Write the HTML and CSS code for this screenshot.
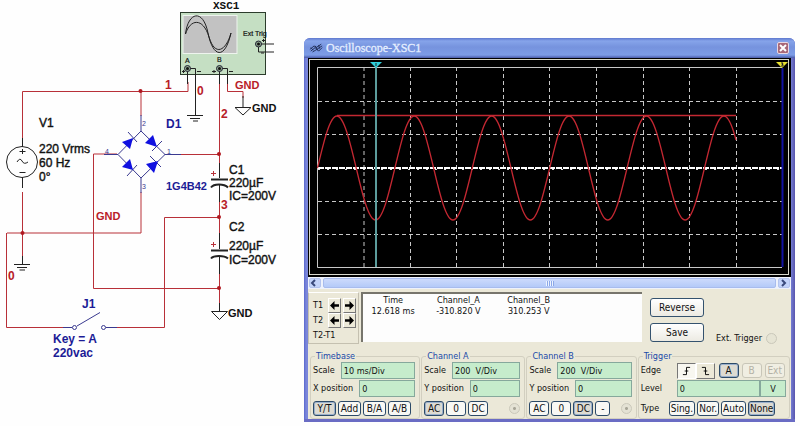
FILE: index.html
```html
<!DOCTYPE html>
<html lang="en">
<head>
<meta charset="utf-8">
<title>Oscilloscope-XSC1</title>
<link rel="stylesheet" href="styles.css">
</head>
<body>
<main class="workspace">
  <svg class="schematic" viewBox="0 0 304 426" role="img" aria-label="Bridge rectifier circuit">
    <g class="wire">
      <path d="M22.5 138V91.500H188V82M141 91V116M22.500 192V256M7 233H141V192M6.500 233V327.500H63M117 327.500H164.500V217.500H219M117 154H93.500V288.500H219M180 154.500H219M219.500 82V165M219.500 201V233M219.500 272V304M195.500 90V104M227.500 82V91.500H243V98"/>
      <path d="M211 173.500H216M213.500 171V176M211 244.500H216M213.500 242V247"/>
    </g>
    <g class="dot"><circle cx="140.500" cy="91" r="2"/><circle cx="22.500" cy="233" r="2"/><circle cx="219" cy="154" r="2"/><circle cx="219" cy="217" r="2"/><circle cx="219" cy="288" r="2"/></g>

    <g class="ink">
      <circle cx="22" cy="162" r="15.500"/>
      <path d="M22.500 138V147M22.500 177V188M19.500 151.500H25.500M22.500 149V154M19.500 172.500H25.500M17 162Q20 157 22 161T28 162"/>
      <path d="M22.500 256V264M14 264.500H30M17 267.500H27M19.500 270H25"/>
      <path d="M195.500 102V115M187 115.500H203M190 118.500H200M193 121H198"/>
      <path d="M243 96V107.500M235 107.500H251L243 115ZM219.500 303V311.500M211.500 311.500H227.500L219.500 319.500Z"/>
      <path d="M219.500 163V178M219.500 184V202M219.500 233V249M219.500 256V274"/>
      <path class="plate" d="M211 179.500H228M211 187.500Q213 184.500 219 184.500T228 187.500M211 250.500H228M211 258.500Q213 256 219 256T228 258.500"/>
    </g>

    <g class="lead">
      <path d="M141 115V131L118 154.500L141 178V193M141 131L165 154.500L141 178M104 154.500H118M165 154.500H181"/>
      <path d="M128 132L137 142M127 176L137 165M152 151L162 141M150 156L161 167"/>
      <path class="diode" d="M122 142L133 138L130 149ZM122 167L130 159L133 170ZM145 143L153 135L157 147ZM146 164L158 161L154 173Z"/>
      <path d="M63 327.500H72M77 326L100 312.500M106 327.500H117"/>
      <circle cx="74.500" cy="327.500" r="2"/><circle cx="103.500" cy="327.500" r="2"/>
    </g>

    <rect class="meter" x="180.500" y="12.500" width="85" height="62"/>
    <rect class="meter-screen" x="183" y="15.500" width="54" height="38"/>
    <g class="ink">
      <path d="M185.500 34C188 12 203 8 208 33S225 60 231 33M185.500 34C190 19 203 17 209 37S226 51 231 33"/>
      <path d="M187.500 68V84M189 68.500H195.500V104M219.500 68V84M221 68.500H227.500V84M258.500 44H274M258.500 44V52H274M182 71.500H185M183.500 70V73M197 71.500H201M212 71.500H216M214 70V73M229 71.500H233M262 40.500H265M263.500 39V42M261 53H264"/>
      <g class="terminal"><circle cx="187.500" cy="68.500" r="3"/><circle cx="219.500" cy="68.500" r="3"/><circle cx="258.500" cy="44" r="3"/></g>
    </g>
    <g class="terminal-core"><circle cx="187.500" cy="68.500" r="1.500"/><circle cx="219.500" cy="68.500" r="1.500"/><circle cx="258.500" cy="44" r="1.500"/></g>
    <g class="tiny"><text x="185" y="63">A</text><text x="217" y="62">B</text><text x="243" y="36">Ext Trig</text></g>

    <text class="device" x="213" y="9">XSC1</text>
    <g class="value">
      <text x="39" y="127">V1</text><text x="39" y="153">220 Vrms</text><text x="39" y="167">60 Hz</text><text x="39" y="181">0°</text>
      <text x="229" y="174">C1</text><text x="229" y="187">220µF</text><text x="229" y="200">IC=200V</text>
      <text x="229" y="231">C2</text><text x="229" y="250">220µF</text><text x="229" y="264">IC=200V</text>
    </g>
    <g class="ground"><text x="252" y="112">GND</text><text x="228" y="317">GND</text></g>
    <g class="net">
      <text x="165" y="89">1</text><text x="197" y="95">0</text><text x="221" y="118">2</text><text x="221" y="209">3</text><text x="8" y="280">0</text>
      <text class="net-gnd" x="235" y="89">GND</text><text class="net-gnd" x="96" y="220">GND</text>
    </g>
    <g class="part">
      <text x="166" y="128">D1</text><text class="part-no" x="166" y="190">1G4B42</text>
      <text x="82" y="308">J1</text><text x="53" y="343">Key = A</text><text x="53" y="357">220vac</text>
    </g>
    <g class="pin"><text x="142" y="126">2</text><text x="105" y="154">4</text><text x="167" y="154">1</text><text x="142" y="189">3</text></g>
  </svg>

  <section class="window">
    <header class="titlebar">
      <svg class="app-icon" viewBox="0 0 16 12" aria-hidden="true"><path d="M1 7L6 3L8 5L14 1M2 9L7 5L9 7L15 3M4 10L9 7L11 9L15 5M2 5L5 8M7 3L10 8M11 2L12 6"/></svg>
      <h1 class="title">Oscilloscope-XSC1</h1>
      <button class="close" type="button" aria-label="Close"><svg viewBox="0 0 10 10"><path d="M2 2L8 8M8 2L2 8"/></svg></button>
    </header>

    <svg class="screen" viewBox="0 0 483 219" role="img" aria-label="Channel A and B traces">
      <rect class="bezel" x="1.500" y="1.500" width="479" height="215"/>
      <path class="grid" d="M56 9V209M102.500 9V209M148.500 9V209M195.500 9V209M241.500 9V209M288.500 9V209M335.500 9V209M381.500 9V209M428.500 9V209M10 43.500H474M10 76.500H474M10 143.500H474M10 176.500H474"/>
      <path class="axis" d="M10 110H474"/>
      <path class="ticks" d="M10 111.500H474"/>
      <path class="frame" d="M474 9.500H9.500V209.500H474"/>
      <path class="cursor-two" d="M474.500 10V209"/>
      <path class="trace" d="M9.500 110c6.300-26.600 12.350-52 19.350-52s13.050 25.400 19.350 52s12.350 52 19.350 52s13.050-25.400 19.350-52s12.350-52 19.350-52s13.050 25.400 19.350 52s12.350 52 19.350 52s13.050-25.400 19.350-52s12.350-52 19.350-52s13.050 25.400 19.350 52s12.350 52 19.350 52s13.050-25.400 19.350-52s12.350-52 19.350-52s13.050 25.400 19.350 52s12.350 52 19.350 52s13.050-25.400 19.350-52s12.350-52 19.350-52s13.050 25.400 19.350 52s12.350 52 19.350 52s13.050-25.400 19.350-52s12.350-52 19.350-52c4.500 0 8.500 10 12.150 24"/>
      <path class="trace" d="M29 57.500H428"/>
      <path class="cursor-one" d="M68 9V209"/>
      <path class="flag-one" d="M62 4H74L68 10Z"/><path class="flag-mark" d="M68 5V8"/>
      <path class="flag-two" d="M468 4H480L474 10Z"/><path class="flag-mark" d="M473 5H475L474 6.500H475V8H473"/>
    </svg>

    <div class="scrollbar">
      <button type="button" class="scroll-step" aria-label="Scroll left"><svg viewBox="0 0 8 8"><path d="M5 1L2 4L5 7"/></svg></button>
      <div class="thumb"><span class="grip"></span></div>
      <button type="button" class="scroll-step" aria-label="Scroll right"><svg viewBox="0 0 8 8"><path d="M3 1L6 4L3 7"/></svg></button>
    </div>

    <div class="panel">
      <div class="readings">
        <div class="cursors">
          <span>T1</span>
          <button type="button" class="nudge" aria-label="T1 left"><svg viewBox="0 0 10 10"><path d="M0 5L5 0V3.500H10V6.500H5V10Z"/></svg></button>
          <button type="button" class="nudge" aria-label="T1 right"><svg viewBox="0 0 10 10"><path d="M10 5L5 0V3.500H0V6.500H5V10Z"/></svg></button>
          <span>T2</span>
          <button type="button" class="nudge" aria-label="T2 left"><svg viewBox="0 0 10 10"><path d="M0 5L5 0V3.500H10V6.500H5V10Z"/></svg></button>
          <button type="button" class="nudge" aria-label="T2 right"><svg viewBox="0 0 10 10"><path d="M10 5L5 0V3.500H0V6.500H5V10Z"/></svg></button>
          <span class="delta">T2-T1</span>
        </div>
        <div class="readout">
          <table>
            <thead><tr><th>Time</th><th>Channel_A</th><th>Channel_B</th></tr></thead>
            <tbody><tr><td>12.618 ms</td><td>-310.820 V</td><td>310.253 V</td></tr></tbody>
          </table>
        </div>
        <div class="actions">
          <button type="button" class="action">Reverse</button>
          <button type="button" class="action">Save</button>
        </div>
        <label class="external">Ext. Trigger <input type="radio" class="port port-faint" name="ext"></label>
      </div>

      <div class="groups">
        <fieldset class="group">
          <legend>Timebase</legend>
          <div class="row"><label for="tb-scale">Scale</label><input class="field" id="tb-scale" value="10 ms/Div"></div>
          <div class="row"><label for="tb-pos">X position</label><input class="field" id="tb-pos" value="0"></div>
          <div class="keys modes"><button type="button" class="key on">Y/T</button><button type="button" class="key">Add</button><button type="button" class="key">B/A</button><button type="button" class="key">A/B</button></div>
        </fieldset>
        <fieldset class="group">
          <legend>Channel A</legend>
          <div class="row"><label for="a-scale">Scale</label><input class="field" id="a-scale" value="200  V/Div"></div>
          <div class="row"><label for="a-pos">Y position</label><input class="field" id="a-pos" value="0"></div>
          <div class="keys"><button type="button" class="key on">AC</button><button type="button" class="key">0</button><button type="button" class="key">DC</button><input type="radio" class="port" name="port-a" checked aria-label="Channel A input"></div>
        </fieldset>
        <fieldset class="group">
          <legend>Channel B</legend>
          <div class="row"><label for="b-scale">Scale</label><input class="field" id="b-scale" value="200  V/Div"></div>
          <div class="row"><label for="b-pos">Y position</label><input class="field" id="b-pos" value="0"></div>
          <div class="keys"><button type="button" class="key">AC</button><button type="button" class="key">0</button><button type="button" class="key on">DC</button><button type="button" class="key narrow">-</button><input type="radio" class="port" name="port-b" checked aria-label="Channel B input"></div>
        </fieldset>
        <fieldset class="group trigger">
          <legend>Trigger</legend>
          <div class="row">
            <span class="name">Edge</span>
            <span class="edges">
              <button type="button" class="edge down" aria-label="Rising edge"><svg viewBox="0 0 10 10"><path d="M1 9H5V1H9M3 5H7"/></svg></button>
              <button type="button" class="edge" aria-label="Falling edge"><svg viewBox="0 0 10 10"><path d="M1 1H5V9H9M3 5H7"/></svg></button>
            </span>
            <span class="sources"><button type="button" class="key on">A</button><button type="button" class="key" disabled>B</button><button type="button" class="key" disabled>Ext</button></span>
          </div>
          <div class="row"><label class="name" for="level">Level</label><span class="level"><input class="field" id="level" value="0"><input class="field unit" aria-label="Unit" value="V"></span></div>
          <div class="keys types"><span class="name">Type</span><button type="button" class="key">Sing.</button><button type="button" class="key">Nor.</button><button type="button" class="key">Auto</button><button type="button" class="key on">None</button></div>
        </fieldset>
      </div>
    </div>
  </section>
</main>
</body>
</html>
```
FILE: styles.css
```css
* { box-sizing: border-box; }
body { margin: 0; background: #fefefe; color: #111; font: 9px/11px "DejaVu Sans Condensed", "DejaVu Sans", sans-serif; }
button, input { font: inherit; color: inherit; margin: 0; padding: 0; }
svg { display: block; }

.workspace { display: grid; grid-template-columns: 304fr 491fr; align-items: start; padding-right: 5px; }

/* schematic */
.schematic { width: 100%; font-family: "Liberation Sans", sans-serif; }
.wire { fill: none; stroke: #b83038; }
.dot { fill: #b01820; }
.ink { fill: none; stroke: #222; }
.plate { stroke-width: 2; }
.lead { fill: none; stroke: #3a3a90; }
.diode { fill: #1010e0; stroke: none; }
.meter { fill: #c5dfc3; stroke: #2c3c2c; }
.meter-screen { fill: #c2c2c2; stroke: #eef4ee; }
.terminal { fill: #90a890; stroke: #223; }
.terminal-core { fill: #111; }
.tiny { font-size: 7px; fill: #111; stroke: #111; stroke-width: .2; }
.device { font: bold 11px "Liberation Mono", monospace; fill: #111; }
.value { font-size: 12px; fill: #111; stroke: #111; stroke-width: .4; }
.ground { font-size: 11px; font-weight: bold; fill: #111; }
.net { font-size: 12px; font-weight: bold; fill: #b82028; }
.net-gnd, .part-no { font-size: 11px; }
.part { font-size: 12px; font-weight: bold; fill: #1c1c96; }
.pin { font-size: 7px; fill: #3a3a90; }

/* window */
.window { margin-top: 38px; padding: 0 4px 3px; border-radius: 6px 6px 0 0; background: linear-gradient(90deg, #5a68cc, #7a86da 2px, #7a86da 99%, #5854ac); box-shadow: inset 0 -3px #6a6cc4; }
.titlebar { display: flex; align-items: center; gap: 3px; height: 20px; margin: 0 -4px; padding: 0 6px 0 5px; border-radius: 6px 6px 0 0; background: linear-gradient(#5f78ce, #86a4ea 3px, #7693de 9px, #7d9ce6 17px, #4a5aa8); }
.app-icon { width: 14px; height: 11px; fill: none; stroke: #1c2850; }
.title { flex: 1; margin: 0; color: #e4eeff; font: 12px/16px "Liberation Serif", serif; -webkit-text-stroke: .3px #e4eeff; }
.close { width: 12px; height: 12px; border: 1px solid #e8d8e4; border-radius: 2px; background: #a86878; }
.close svg { width: 10px; height: 10px; fill: none; stroke: #fff; stroke-width: 2; }

.screen { width: 100%; background: #000; }
.bezel { fill: none; stroke: #d8d8cc; }
.grid { fill: none; stroke: #c8c8c8; stroke-dasharray: 4 3; }
.axis { stroke: #fff; stroke-width: 2; stroke-dasharray: 6 1; }
.ticks { stroke: #ddd; stroke-dasharray: 2 7; }
.frame { fill: none; stroke: #c8c8c8; }
.trace { fill: none; stroke: #c42832; stroke-width: 1.3; }
.cursor-one { stroke: #5c9c9c; stroke-width: 2; }
.cursor-two { stroke: #1010a0; stroke-width: 2; }
.flag-one { fill: #30d0dc; }
.flag-two { fill: #e8e030; }
.flag-mark { fill: none; stroke: #222; }

.scrollbar { display: flex; gap: 2px; height: 12px; padding: 1px; background: #eef2fc; }
.scroll-step { width: 12px; border: 1px solid #b4c4ee; border-radius: 2px; background: #c4d4fa; }
.scroll-step svg { width: 8px; height: 8px; fill: none; stroke: #3a4a7c; stroke-width: 2; }
.thumb { flex: 1; display: flex; justify-content: center; align-items: center; border: 1px solid #a8bcee; border-radius: 2px; background: linear-gradient(#ccdafc, #b4caf8); }
.grip { width: 8px; height: 5px; background: repeating-linear-gradient(90deg, #eef4ff 0 1px, #8ca8e8 1px 2px); }

.panel { padding: 3px 1px 0 0; background: #ebe8d8; }
.readings { display: grid; grid-template-columns: 51px minmax(0, 281fr) 60px minmax(0, 84fr); column-gap: 2px; min-height: 52px; }
.cursors { display: grid; grid-template-columns: 1fr 13px 13px; gap: 0 2px; align-content: start; align-items: center; padding: 5px 2px 0 4px; border: 1px solid #c4c0b0; border-top-color: #fff; }
.nudge { height: 15px; display: grid; place-items: center; border: 1px solid; border-color: #fff #777 #777 #fff; background: #ece9d8; }
.nudge svg { width: 9px; height: 9px; fill: #000; }
.delta { grid-column: 1 / -1; margin-top: 2px; }
.readout { margin-bottom: 2px; border: solid #77756c; border-width: 2px 0 0 2px; background: #fdfdfd; }
.readout table { border-collapse: collapse; table-layout: fixed; width: 72%; margin-top: 1px; }
.readout th, .readout td { padding: 0; font-weight: normal; text-align: center; white-space: nowrap; }
.readout th:first-child { width: 30%; }
.actions { display: grid; gap: 6px; align-content: start; margin: 6px 0 0 6px; }
.action { height: 19px; border: 1px solid #34526e; border-radius: 3px; background: linear-gradient(#fff, #eceae2); font-size: 10px; }
.external { display: flex; align-self: end; justify-content: flex-end; align-items: center; gap: 4px; margin-right: 13px; white-space: nowrap; }

.groups { display: grid; grid-template-columns: 110fr 104fr 110fr 152fr; gap: 1px; padding: 7px 0 0 2px; }
.group { min-width: 0; margin: 0; padding: 0 4px 2px 2px; border: 1px solid #d2cfc0; border-radius: 3px; }
.group legend { margin-left: 2px; padding: 0 1px; color: #1a48a8; }
.row { display: flex; align-items: center; gap: 6px; height: 17px; margin-bottom: 1px; white-space: nowrap; }
.field { flex: 1; min-width: 0; width: 0; height: 17px; padding: 0 2px; border: 1px solid #86a89c; border-radius: 0; background: #c6eccc; white-space: pre; }
.keys { display: flex; align-items: center; gap: 2px; margin-top: 4px; }
.key { min-width: 20px; height: 15px; padding: 0 1px; border: 1px solid #2c4a68; border-radius: 3px; background: #f8f8f4; font-size: 10px; line-height: 11px; }
.modes .key { min-width: 23px; }
.key.on { background: #dddbd2; box-shadow: inset 0 0 0 1px #9ab0cc; }
.key:disabled { border-color: #c8c6b8; background: #f0eee2; color: #b4b2a6; }
.key.narrow { min-width: 15px; }
.port { appearance: none; width: 11px; height: 11px; margin-left: auto; border: 1px solid #cac8ba; border-radius: 50%; background: radial-gradient(#a8a698 0 1px, #e4e2d4 2px); }
.port-faint { margin-left: 0; background: #e6e4d4; }
.trigger { padding-right: 3px; }
.name { flex: 0 0 auto; width: 26px; }
.trigger .row { gap: 10px; }
.edges { display: flex; }
.edge { display: grid; place-items: center; width: 19px; height: 16px; border: 1px solid; border-color: #fff #777 #777 #fff; background: #ece9d8; }
.edge.down { border-color: #777 #fff #fff #777; background: #f8f7f0; }
.edge svg { width: 9px; height: 10px; fill: none; stroke: #000; }
.sources { display: flex; gap: 3px; margin-left: -6px; }
.level { display: flex; flex: 1; min-width: 0; }
.unit { flex: 0 0 26px; text-align: center; }
```
